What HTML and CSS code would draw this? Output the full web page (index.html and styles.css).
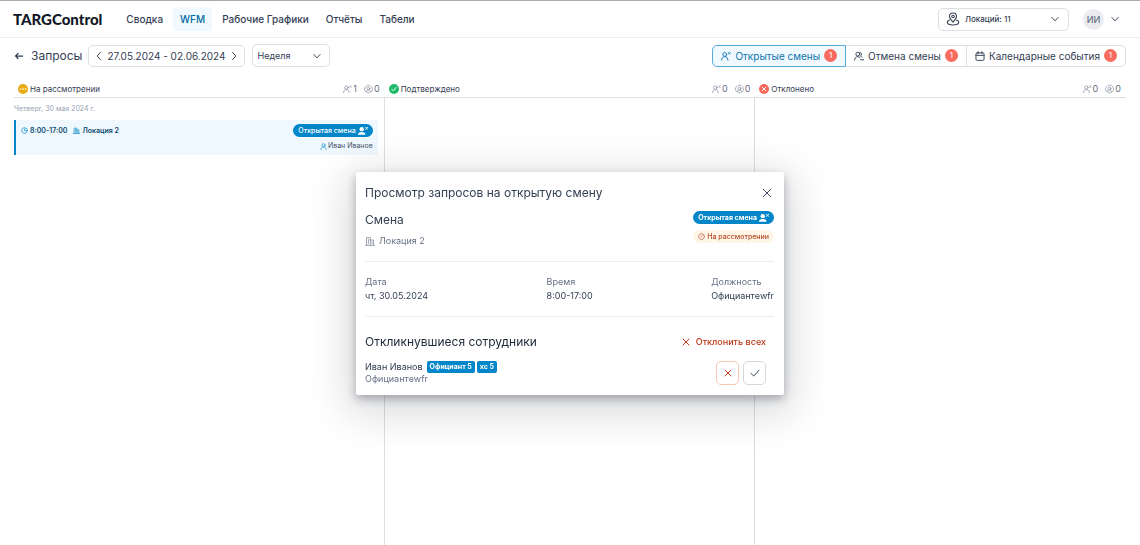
FILE: index.html
```html
<!DOCTYPE html>
<html lang="ru">
<head>
<meta charset="utf-8">
<meta name="viewport" content="width=device-width, initial-scale=1">
<title>TARGControl – Запросы</title>
<link rel="stylesheet" href="styles.css">
</head>
<body>
<svg class="sprite" aria-hidden="true">
  <symbol id="chev-down" viewBox="0 0 16 16"><path d="M3 5.500l5 5.500 5-5.500"/></symbol>
  <symbol id="chev-left" viewBox="0 0 16 16"><path d="M10.500 2L5 8l5.500 6"/></symbol>
  <symbol id="chev-right" viewBox="0 0 16 16"><path d="M5.500 2L11 8l-5.500 6"/></symbol>
  <symbol id="arrow-left" viewBox="0 0 16 16"><path d="M14 8H2.500M6.500 4L2.500 8l4 4"/></symbol>
  <symbol id="cross" viewBox="0 0 16 16"><path d="M2 2l12 12M14 2L2 14"/></symbol>
  <symbol id="check" viewBox="0 0 16 16"><path d="M1.500 8.500l4.500 4.500L14.500 3.500"/></symbol>
  <symbol id="user" viewBox="0 0 16 16"><circle cx="8" cy="5" r="3.500"/><path d="M2 15c0-4 2.500-6 6-6s6 2 6 6"/></symbol>
  <symbol id="user-x" viewBox="0 0 16 16"><circle cx="6" cy="5.500" r="3"/><path d="M1 14.500c0-3.500 2-5.500 5-5.500s5 2 5 5.500M12 2.500l2.500 2.500M14.500 2.500l-2.500 2.500"/></symbol>
  <symbol id="user-x-solid" viewBox="0 0 16 14"><circle cx="6" cy="4" r="3.500" fill="currentColor" stroke="none"/><path d="M0 13c0-3 2-4.500 6-4.500s6 1.500 6 4.500z" fill="currentColor" stroke="none"/><path d="M12 1l3.500 3.500M15.500 1l-3.500 3.500"/></symbol>
  <symbol id="user-minus" viewBox="0 0 16 16"><circle cx="6" cy="5" r="3"/><path d="M1 14.500c0-3.500 2-5.500 5-5.500 1.500 0 2.500.5 3.500 1.500M9.500 2.200a3 3 0 0 1 1 5.600l2 2.200M10.500 14h5"/></symbol>
  <symbol id="badge-user" viewBox="0 0 16 16"><path d="M3.500 13C1.800 12 1 10 1 8s1-4 2.500-5.200M12.500 2.800C14 4 15 6 15 8s-.8 4-2.500 5M5.500 1.800c1.500-.8 3.500-.8 5 0M5 14c2 1.200 4 1.200 6 0"/><circle cx="8" cy="7" r="2.500"/><path d="M3.800 12.500c.7-3.500 7.700-3.500 8.400 0"/></symbol>
  <symbol id="clock" viewBox="0 0 16 16"><circle cx="8" cy="8" r="6.500"/><path d="M8 4v4.500h3.500"/></symbol>
  <symbol id="building" viewBox="0 0 16 16"><path d="M1 15h14M2.500 15V2.500h6V15M8.500 6.500h5V15M5.500 5.500v6.500M11 9.500v2.500"/></symbol>
  <symbol id="calendar" viewBox="0 0 16 16"><rect x="1.500" y="3" width="13" height="12" rx="2"/><path d="M1.500 7h13M5 1v3.500M11 1v3.500"/></symbol>
  <symbol id="pin" viewBox="0 0 20 20"><path d="M10 14.500C7 11 5 9 5 6.500a5 5 0 0 1 10 0C15 9 13 11 10 14.500z"/><circle cx="10" cy="6.500" r="1.800"/><path d="M5 11.500c-5 2-4.500 7 5 7s10-5 5-7"/></symbol>
  <symbol id="dashed-clock" viewBox="0 0 16 16"><circle cx="8" cy="8" r="6.500" stroke-dasharray="3 1.500"/><path d="M6 9.500l4.500-4.500"/></symbol>
  <symbol id="st-wait" viewBox="0 0 16 16"><circle cx="8" cy="8" r="8" fill="#eaaa14" stroke="none"/><g fill="#fff" stroke="none"><circle cx="4" cy="8" r="1.300"/><circle cx="8" cy="8" r="1.300"/><circle cx="12" cy="8" r="1.300"/></g></symbol>
  <symbol id="st-ok" viewBox="0 0 16 16"><circle cx="8" cy="8" r="8" fill="#20ba6b" stroke="none"/><path d="M4.500 8.500L7 11l4.500-5.500" stroke="#fff"/></symbol>
  <symbol id="st-no" viewBox="0 0 16 16"><circle cx="8" cy="8" r="8" fill="#fa695c" stroke="none"/><path d="M5 5l6 6M11 5l-6 6" stroke="#fff"/></symbol>
</svg>

<header class="topbar">
  <a class="logo" href="#">TARGControl</a>
  <nav class="nav">
    <a href="#">Сводка</a>
    <a href="#" class="active">WFM</a>
    <a href="#">Рабочие Графики</a>
    <a href="#">Отчёты</a>
    <a href="#">Табели</a>
  </nav>
  <div class="account">
    <div class="picker locations">
      <svg class="icon icon-lg"><use href="#pin"/></svg>
      <select aria-label="Локации"><option>Локаций: 11</option></select>
      <svg class="icon chevron"><use href="#chev-down"/></svg>
    </div>
    <button class="profile" aria-label="Профиль"><span class="avatar">ИИ</span><svg class="icon"><use href="#chev-down"/></svg></button>
  </div>
</header>

<main class="page">
  <div class="toolbar">
    <button class="plain" aria-label="Назад"><svg class="icon bold"><use href="#arrow-left"/></svg></button>
    <h1>Запросы</h1>
    <div class="range">
      <button class="plain" aria-label="Предыдущая неделя"><svg class="icon"><use href="#chev-left"/></svg></button>
      <span>27.05.2024 - 02.06.2024</span>
      <button class="plain" aria-label="Следующая неделя"><svg class="icon"><use href="#chev-right"/></svg></button>
    </div>
    <div class="picker period">
      <select aria-label="Период"><option>Неделя</option></select>
      <svg class="icon chevron"><use href="#chev-down"/></svg>
    </div>
    <div class="tabs">
      <button class="tab selected"><svg class="icon"><use href="#user-x"/></svg>Открытые смены<span class="count">1</span></button>
      <button class="tab"><svg class="icon"><use href="#user-minus"/></svg>Отмена смены<span class="count">1</span></button>
      <button class="tab"><svg class="icon"><use href="#calendar"/></svg>Календарные события<span class="count">1</span></button>
    </div>
  </div>

  <div class="board">
    <section class="column">
      <h2 class="column-head"><svg class="icon status"><use href="#st-wait"/></svg>На рассмотрении
        <span class="stats"><span><svg class="icon"><use href="#user-x"/></svg>1</span><span><svg class="icon"><use href="#badge-user"/></svg>0</span></span></h2>
      <div class="column-body">
        <p class="day">Четверг, 30 мая 2024 г.</p>
        <article class="card">
          <div class="card-row">
            <svg class="icon icon-sm"><use href="#clock"/></svg><b>8:00-17:00</b>
            <svg class="icon icon-sm"><use href="#building"/></svg><b>Локация 2</b>
            <span class="pill">Открытая смена<svg class="icon"><use href="#user-x-solid"/></svg></span>
          </div>
          <div class="card-row person"><svg class="icon icon-sm"><use href="#user"/></svg>Иван Иванов</div>
        </article>
      </div>
    </section>
    <section class="column">
      <h2 class="column-head"><svg class="icon status"><use href="#st-ok"/></svg>Подтверждено
        <span class="stats"><span><svg class="icon"><use href="#user-x"/></svg>0</span><span><svg class="icon"><use href="#badge-user"/></svg>0</span></span></h2>
      <div class="column-body"></div>
    </section>
    <section class="column">
      <h2 class="column-head"><svg class="icon status"><use href="#st-no"/></svg>Отклонено
        <span class="stats"><span><svg class="icon"><use href="#user-x"/></svg>0</span><span><svg class="icon"><use href="#badge-user"/></svg>0</span></span></h2>
      <div class="column-body"></div>
    </section>
  </div>
</main>

<div class="overlay">
  <div class="modal" role="dialog" aria-labelledby="modal-title">
    <header class="modal-head">
      <h2 id="modal-title">Просмотр запросов на открытую смену</h2>
      <button class="plain close" aria-label="Закрыть"><svg class="icon"><use href="#cross"/></svg></button>
    </header>
    <div class="shift">
      <div>
        <h3>Смена</h3>
        <p class="place"><svg class="icon"><use href="#building"/></svg>Локация 2</p>
      </div>
      <div class="labels">
        <span class="pill strong">Открытая смена<svg class="icon"><use href="#user-x-solid"/></svg></span>
        <span class="pill pending"><svg class="icon icon-sm"><use href="#dashed-clock"/></svg>На рассмотрении</span>
      </div>
    </div>
    <dl class="facts">
      <div><dt>Дата</dt><dd>чт, 30.05.2024</dd></div>
      <div><dt>Время</dt><dd>8:00-17:00</dd></div>
      <div><dt>Должность</dt><dd>Официантewfr</dd></div>
    </dl>
    <div class="staff-head">
      <h3>Откликнувшиеся сотрудники</h3>
      <button class="plain reject-all"><svg class="icon icon-xs"><use href="#cross"/></svg>Отклонить всех</button>
    </div>
    <div class="staff">
      <div>
        <p class="name">Иван Иванов <span class="tag">Официант 5</span><span class="tag">хс 5</span></p>
        <p class="role">Официантewfr</p>
      </div>
      <div class="actions">
        <button class="square reject" aria-label="Отклонить"><svg class="icon icon-xs"><use href="#cross"/></svg></button>
        <button class="square" aria-label="Принять"><svg class="icon"><use href="#check"/></svg></button>
      </div>
    </div>
  </div>
</div>
</body>
</html>
```
FILE: styles.css
```css
* { box-sizing: border-box; }
body {
  margin: 0;
  min-height: 100vh;
  display: flex;
  flex-direction: column;
  background: #fff;
  color: #344054;
  font: 10px/14px Inter, "Liberation Sans", sans-serif;
}
h1, h2, h3, p, dl, dd { margin: 0; font-weight: 400; }
a { color: inherit; text-decoration: none; }
button, select { font: inherit; color: inherit; }
.sprite { position: absolute; width: 0; height: 0; }
.icon {
  flex: none;
  width: 10px;
  height: 10px;
  fill: none;
  stroke: currentColor;
  stroke-width: 1.5;
  stroke-linecap: round;
  stroke-linejoin: round;
}
.icon-lg { width: 14px; height: 14px; }
.icon-sm { width: 7px; height: 7px; }
.icon-xs { width: 8px; height: 8px; stroke-width: 2; }
.icon.bold { stroke-width: 2; }
.plain { display: flex; align-items: center; padding: 0; border: 0; background: none; }

.topbar {
  display: flex;
  align-items: center;
  height: 38px;
  padding: 0 20px 0 13px;
  border-top: 1px solid #aaa;
  border-bottom: 1px solid #ececee;
}
.logo { color: #101828; font: 900 15px/20px Lato, sans-serif; }
.nav { display: flex; gap: 3px; margin-left: 17px; }
.nav a { padding: 5px 7px; border-radius: 4px; font-weight: 500; }
.nav .active { color: #026aa2; background: #f0f9ff; }
.account { display: flex; align-items: center; gap: 14px; margin-left: auto; }
.picker {
  display: flex;
  align-items: center;
  height: 23px;
  border: 1px solid #dcdee3;
  border-radius: 5px;
}
.picker select { flex: 1; min-width: 0; padding: 0; border: 0; background: none; appearance: none; }
.locations { width: 131px; padding: 0 8px 0 7px; gap: 5px; font-size: 8px; font-weight: 500; }
.profile { display: flex; align-items: center; gap: 6px; padding: 0; border: 0; background: none; }
.avatar {
  width: 21px;
  border-radius: 50%;
  background: #eaecf0;
  color: #667085;
  font: 500 9px/21px Inter, sans-serif;
  text-align: center;
}

.page { flex: 1; display: flex; flex-direction: column; padding: 0 14px; }
.toolbar { display: flex; align-items: center; padding-top: 6px; }
h1 { margin: 0 6px 0 7px; font-size: 12px; line-height: 16px; }
.range {
  display: flex;
  align-items: center;
  gap: 3px;
  height: 22px;
  margin-right: 7px;
  padding: 0 5px;
  border: 1px solid #dcdee3;
  border-radius: 5px;
}
.period { width: 78px; padding: 0 7px 0 5px; font-size: 9px; }
.tabs { display: flex; margin-left: auto; }
.tab {
  display: flex;
  align-items: center;
  gap: 4px;
  height: 22px;
  padding: 0 8px;
  border: 1px solid #dcdee3;
  border-left-width: 0;
  background: #fff;
  white-space: nowrap;
}
.tab:first-child { border-radius: 5px 0 0 5px; }
.tab:last-child { border-radius: 0 5px 5px 0; }
.tab.selected { border: 1px solid #57a8d6; background: #f0f9ff; color: #0b75ad; }
.count {
  width: 13px;
  border-radius: 50%;
  background: #f96a5f;
  color: #fff;
  font-size: 8px;
  line-height: 13px;
}

.board { flex: 1; display: grid; grid-template-columns: repeat(3, 1fr); margin-top: 13px; }
.column { display: flex; flex-direction: column; }
.column-head {
  display: flex;
  align-items: center;
  gap: 2px;
  height: 18px;
  padding: 0 5px 0 4px;
  border-bottom: 1px solid #dedede;
  font-size: 8px;
  line-height: 14px;
}
.stats { display: flex; gap: 7px; margin-left: auto; color: #667085; font-size: 9px; }
.stats span { display: flex; align-items: center; gap: 1px; }
.stats .icon { width: 9px; stroke-width: 1; }
.column-body { flex: 1; padding-right: 6px; border-right: 1px solid #dedede; }
.column:last-child .column-body { border-right: 0; }
.day { padding: 5px 0; color: #98a2b3; font-size: 7px; line-height: 12px; }
.card { padding: 4px 5px 3px 5px; border-left: 2px solid #0086c9; background: #f0f8ff; color: #0b4a6f; }
.card-row { display: flex; align-items: center; gap: 2px; font-size: 7px; line-height: 12px; }
.card-row b { margin-right: 4px; font-weight: 600; }
.card-row .icon { color: #0086c9; }
.card-row.person { justify-content: flex-end; margin-top: 3px; gap: 1px; color: #475467; }
.pill {
  display: flex;
  align-items: center;
  gap: 2px;
  height: 13px;
  margin-left: auto;
  padding: 0 5px;
  border-radius: 7px;
  background: #0086c9;
  color: #fff;
  font-size: 7px;
  line-height: 13px;
  font-weight: 500;
}
.card-row .pill .icon { color: #fff; }
.pill.strong { font-weight: 700; }
.pill.pending { background: #fff6e8; color: #b54726; }

.overlay {
  position: fixed;
  inset: 0;
  display: flex;
  align-items: center;
  justify-content: center;
  padding-top: 22px;
}
.modal {
  width: 428px;
  max-width: 100%;
  padding: 12px 10px 10px 9px;
  border-radius: 2px;
  background: #fff;
  box-shadow: 0 4px 10px rgba(16, 24, 40, 0.3), 0 10px 40px 8px rgba(16, 24, 40, 0.16);
}
.modal-head { display: flex; justify-content: space-between; align-items: center; }
.modal h2, .modal h3 { font-size: 12px; line-height: 18px; }
.close { padding-right: 2px; }
.shift {
  display: flex;
  justify-content: space-between;
  padding: 9px 0 13px;
  border-bottom: 1px solid #eaecf0;
}
.place { display: flex; align-items: center; gap: 4px; margin-top: 5px; color: #667085; font-size: 9px; }
.place .icon { stroke-width: 1; }
.labels { display: flex; flex-direction: column; align-items: flex-end; gap: 6px; }
.facts {
  display: flex;
  justify-content: space-between;
  padding: 13px 0;
  border-bottom: 1px solid #eaecf0;
  font-size: 9px;
}
.facts dt { color: #667085; }
.staff-head { display: flex; justify-content: space-between; padding: 16px 8px 10px 0; }
.staff-head h3 { color: #1d2939; }
.reject-all { gap: 6px; color: #b93815; font-size: 9px; font-weight: 500; }
.staff { display: flex; justify-content: space-between; padding-right: 8px; font-size: 9px; line-height: 12px; }
.name { display: flex; align-items: center; gap: 2px; }
.role { color: #667085; }
.tag { padding: 0 3px; border-radius: 2px; background: #0086c9; color: #fff; font-size: 7px; font-weight: 700; }
.name .tag:first-child { margin-left: 2px; }
.actions { display: flex; gap: 4px; }
.square {
  display: flex;
  align-items: center;
  justify-content: center;
  width: 23px;
  height: 24px;
  padding: 0;
  border: 1px solid #d5d8de;
  border-radius: 5px;
  background: #fff;
}
.square.reject { border-color: #f7c9b0; color: #b93815; }
```
